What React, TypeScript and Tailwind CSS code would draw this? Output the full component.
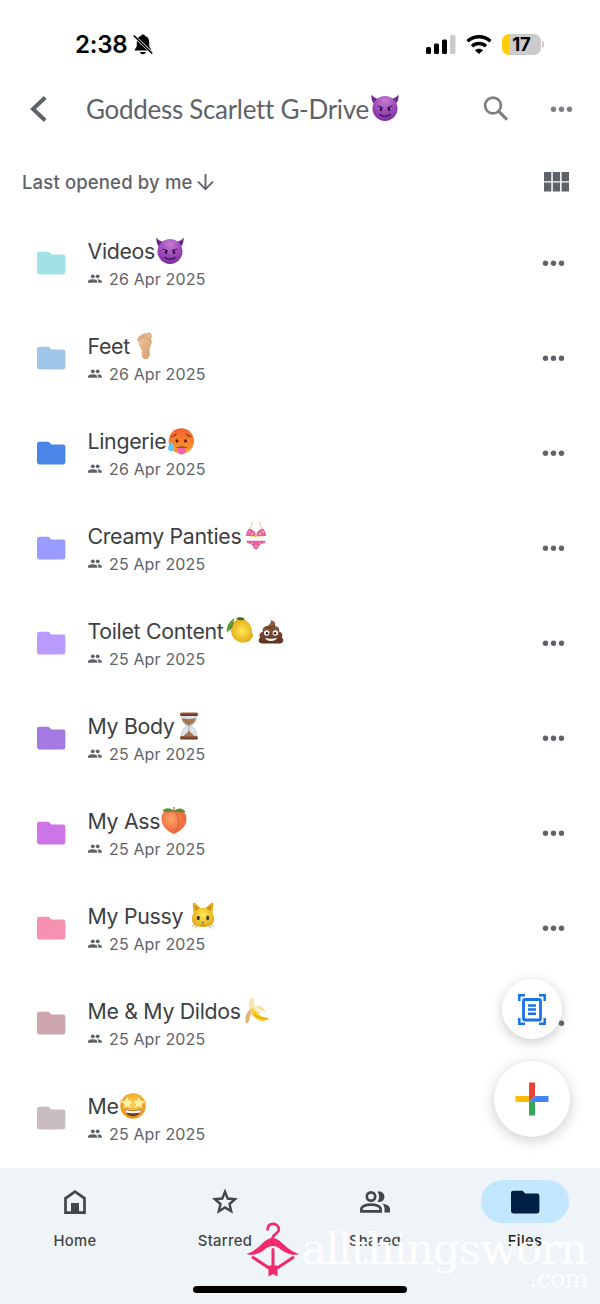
import React from "react";

type EmojiName =
  | "devil"
  | "foot"
  | "hot"
  | "bikini"
  | "lemon"
  | "poo"
  | "hourglass"
  | "peach"
  | "cat"
  | "banana"
  | "starstruck";

type Folder = {
  name: string;
  date: string;
  color: string;
  emojis: EmojiName[];
  gap: string;
};

const folders: Folder[] = [
  { name: "Videos", date: "26 Apr 2025", color: "text-[#a1e2e6]", emojis: ["devil"], gap: "ml-px" },
  { name: "Feet", date: "26 Apr 2025", color: "text-[#9fc5e8]", emojis: ["foot"], gap: "ml-[1.500px]" },
  { name: "Lingerie", date: "26 Apr 2025", color: "text-[#4986e7]", emojis: ["hot"], gap: "ml-px" },
  { name: "Creamy Panties", date: "25 Apr 2025", color: "text-[#9a9cff]", emojis: ["bikini"], gap: "ml-px" },
  { name: "Toilet Content", date: "25 Apr 2025", color: "text-[#b99aff]", emojis: ["lemon", "poo"], gap: "ml-[3px]" },
  { name: "My Body", date: "25 Apr 2025", color: "text-[#a47ae2]", emojis: ["hourglass"], gap: "ml-0" },
  { name: "My Ass", date: "25 Apr 2025", color: "text-[#cd74e6]", emojis: ["peach"], gap: "ml-0" },
  { name: "My Pussy", date: "25 Apr 2025", color: "text-[#f691b2]", emojis: ["cat"], gap: "ml-1.5" },
  { name: "Me & My Dildos", date: "25 Apr 2025", color: "text-[#cca6ac]", emojis: ["banana"], gap: "ml-[2.500px]" },
  { name: "Me", date: "25 Apr 2025", color: "text-[#cabdbf]", emojis: ["starstruck"], gap: "ml-0" },
];

const art: Record<EmojiName, React.ReactNode> = {
  devil: (
    <>
      <path d="M.5.5C0 6 2 9.500 5 11l5-6C6 5 3 4 .5.500ZM27.500.500C28 6 26 9.500 23 11l-5-6c4 0 7-1 9.500-4.500Z" fill="#6d2390" />
      <circle cx="14" cy="14.500" r="12.500" fill="url(#purple)" />
      <path d="M7 12.200c1.500 0 3 .600 4.300 1.600M21 12.200c-1.500 0-3 .600-4.300 1.600" stroke="#3b0b5c" strokeWidth="1.100" fill="none" strokeLinecap="round" />
      <ellipse cx="10" cy="15.200" rx="1.200" ry="2" fill="#35104f" />
      <ellipse cx="18" cy="15.200" rx="1.200" ry="2" fill="#35104f" />
      <path d="M9 20.500c2.800 2.300 7.200 2.300 10 0" stroke="#35104f" strokeWidth="1.200" fill="none" strokeLinecap="round" />
    </>
  ),
  foot: (
    <>
      <path d="M7.500 8c2-3 9-4 12-1.500 2 2 1.500 5-.300 8-1.500 3 .500 6-.700 9.500-1 3.500-6.300 4.500-7.500.500-.700-3 .500-4.500-.800-7.500-1.400-3-3.700-6-2.700-9Z" fill="url(#skin)" />
      <g fill="#e7b78d" stroke="#c68c60" strokeWidth=".5">
        <ellipse cx="17.800" cy="4.300" rx="2.600" ry="3.500" />
        <ellipse cx="13.800" cy="3.700" rx="1.500" ry="2.400" />
        <ellipse cx="11.200" cy="4.400" rx="1.300" ry="2" />
        <ellipse cx="9" cy="5.700" rx="1.200" ry="1.700" />
        <ellipse cx="7.500" cy="7.600" rx="1" ry="1.400" />
      </g>
    </>
  ),
  hot: (
    <>
      <circle cx="14.300" cy="14" r="12.700" fill="url(#heat)" />
      <path d="M4.500 9.500c2 0 3.700-1 4.500-2.500M24 9.500c-2 0-3.700-1-4.500-2.500" stroke="#8d2b12" strokeWidth="1.100" fill="none" strokeLinecap="round" />
      <ellipse cx="10" cy="14" rx="1.500" ry="1.800" fill="#652116" />
      <ellipse cx="18.500" cy="14" rx="1.500" ry="1.800" fill="#652116" />
      <path d="M9 21c3-2 8.500-2 11.500 0Z" fill="#7c2317" />
      <path d="M10.800 20.500h7.600v4c0 4-7.600 4-7.600 0Z" fill="#f066ac" />
      <path d="M4.200 14c2 3.600 3 5 3 7a3 3 0 0 1-6.200 0c0-2 1.700-3.600 3.200-7Z" fill="#67c5f4" />
    </>
  ),
  bikini: (
    <>
      <path d="M10 0c-.500 4-1.500 6-3.500 9M18 0c.500 4 1.500 6 3.500 9M5 13c5 2 13 2 18 0" stroke="#eec05e" strokeWidth="1.100" strokeDasharray="1.700 .7" fill="none" />
      <path d="M7.500 6.500C5.500 8 4 10.500 4 14h9.500c.800-3-1-5.500-6-7.500ZM20.500 6.500c2 1.500 3.500 4 3.500 7.500h-9.500c-.800-3 1-5.500 6-7.500ZM4.500 18.800h19l-.500 2.200c-4.500.500-6.500 3-7.500 6.200h-3C11.500 24 9.500 21.500 5 21Z" fill="#e85fa6" />
      <g fill="#ffda66">
        <circle cx="7.500" cy="10" r=".9" />
        <circle cx="10" cy="12" r=".9" />
        <circle cx="18" cy="12" r=".9" />
        <circle cx="21" cy="10" r=".9" />
        <circle cx="14" cy="24" r=".9" />
        <circle cx="10" cy="21.200" r=".7" />
        <circle cx="18" cy="21.200" r=".7" />
      </g>
    </>
  ),
  lemon: (
    <>
      <path d="M6 8C8 3 15 .500 20.500 4c4 2.500 5.700 7.500 5.500 12 1.500 1.500 1.500 3 .300 4.500-1 .500-1.300 1.500-2.300 3-4 3-11 3-15.500-1.500C4.500 18 4.500 12 6 8Z" fill="url(#lemon)" />
      <path d="M8 1.500C4 4 .500 9 .700 15c4-1.500 7-5.500 7.300-13.500Z" fill="#4f8a21" />
      <path d="M10 2C12-.5 17-.5 19 2.500c-3 1-6 1-9-.5Z" fill="#376e17" />
      <path d="M7.500 3C5 7 3.500 10 1.500 14" stroke="#a2be56" strokeWidth=".7" fill="none" />
    </>
  ),
  poo: (
    <>
      <path d="M14 3c3.500 1 5 3.200 4 6 3.500.500 5 3 4 5.500 3.500 1 4.200 4 2.800 6 2.700 2 1.500 6-2 6H5.500c-4 0-5-4-2.300-6-1.500-2-.500-5 2.800-6-1-2.500.5-5 4-5.500 2-1 4-2.500 4-6Z" fill="url(#brown)" />
      <path d="M9 10c3 1.500 6 .500 9-1" stroke="#512e22" strokeWidth=".8" fill="none" />
      <circle cx="9.700" cy="16" r="2.700" fill="#fff" />
      <circle cx="18.300" cy="16" r="2.700" fill="#fff" />
      <circle cx="10" cy="16.200" r="1.300" fill="#332520" />
      <circle cx="18" cy="16.200" r="1.300" fill="#332520" />
      <path d="M8 21c4 1 8 1 12 0-1.500 4-10.500 4-12 0Z" fill="#fff" />
    </>
  ),
  hourglass: (
    <>
      <path d="M6.500 3h15c0 6-1.500 8.500-5.500 11 4 2.500 5.500 5 5.500 11h-15c0-6 1.500-8.500 5.500-11-4-2.500-5.500-5-5.500-11Z" fill="#dce4ec" stroke="#a4acb4" strokeWidth=".6" />
      <path d="M7.500 6.500c4 1 9 1 13 0-.500 3.500-2.800 5-6.500 7-4-2-6-3.500-6.500-7ZM14 14v7M8.500 24.500c1-2 3.500-2.500 5.500-5.500 2 3 4.500 3.500 5.500 5.500Z" fill="#a57855" stroke="#a57855" strokeWidth=".6" />
      <rect x="5" y=".500" width="18" height="3.500" rx="1.500" fill="url(#brown)" />
      <rect x="5" y="24" width="18" height="3.500" rx="1.500" fill="url(#brown)" />
    </>
  ),
  peach: (
    <>
      <path d="M14 4c6-4 12.500 0 12.500 8S20 24.500 14 27C8 24.500 1.500 20 1.500 12S8 0 14 4Z" fill="url(#peach)" />
      <path d="M15 5c5 5 5 15 0 20" stroke="#cf552b" strokeWidth=".9" fill="none" />
      <path d="M14 4C10 .300 5 .500 2.500 4c4 1.300 8 1.200 11.500 0ZM14 4c4-3.700 9-3.500 11.500 1-4 .800-8 .500-11.500-1Z" fill="#588c2c" />
      <path d="M13.500 0h1v5h-1z" fill="#7c4b24" />
    </>
  ),
  cat: (
    <>
      <path d="M4 2.500c-1-1.500.500-2.300 2-1.500l5.500 5h5L22 1c1.500-.800 2.500 0 2.300 1.500L23.500 11c2 4 2.200 8 0 11-3 4-16 4-19 0-2.200-3-2-7 0-11L3.700 2.500Z" fill="url(#lemon)" />
      <path d="m5.500 3 1 6 4-3ZM22.500 3l-1 6-4-3Z" fill="#d68a18" />
      <ellipse cx="9.300" cy="16" rx="1.400" ry="2.300" fill="#2c3030" />
      <ellipse cx="18.700" cy="16" rx="1.400" ry="2.300" fill="#2c3030" />
      <path d="M12.700 20h2.600L14 21.500Z" fill="#765253" />
      <path d="M14 21.500V23m-3.500 0c1.500.700 2.500.500 3.500-.500 1 1 2 1.200 3.500.5M6 22.500l-3 2M8 24l-3 2.500M22 22.500l3 2M20 24l3 2.500" stroke="#9b7825" strokeWidth=".6" fill="none" />
    </>
  ),
  banana: (
    <>
      <path d="M7 1c2-1.500 4 0 4 3 0 5 2 9 7 11.500l-8 5C6 15 5 8 7 1Z" fill="#f5e5af" />
      <path d="M8 11c3 1 5 4 8 6.500 3 2.300 7 3 10 4-3 3-9 3.300-12.500.5C9.500 19 9 15 8 11Z" fill="#f8cc27" />
      <path d="M8 12c-5 3-7 9-4.500 15 3-2 4.500-8 4.500-15Z" fill="#dcb76f" />
      <path d="M12 10c5-2.500 9 0 11 6-3-2.500-7-3-11-6Z" fill="#f6dea0" />
      <path d="M10 16c3 4 8 6 15 5.500" stroke="#dfa50f" strokeWidth="1.200" fill="none" />
    </>
  ),
  starstruck: (
    <>
      <circle cx="14" cy="14" r="12.700" fill="url(#gold)" />
      <path d="m8.300 4 2 4.300 5 .5-3.800 3.400 1.200 4.800-4.400-2.500L4 17l1.200-4.800L.500 9l5.500-.500ZM19.700 4l2 4.300 5.600.700-4.500 3.200L24 17l-4.300-2.500-4.400 2.500 1.200-4.800-3.800-3.400 5-.500Z" fill="#fff0a1" stroke="#e7a22b" strokeWidth=".5" />
      <path d="M6 17.500c5 1.500 11 1.500 16 0 0 9-16 9-16 0Z" fill="#713d1c" />
      <path d="M6.500 18c5 1.500 10 1.500 15 0v2.500c-5 1-10 1-15 0Z" fill="#fff" />
    </>
  ),
};

function Emoji({ name }: { name: EmojiName }) {
  return (
    <svg viewBox="0 0 28 28" className="size-7 shrink-0" role="img" aria-label={name}>
      {art[name]}
    </svg>
  );
}

// shared gradients used by the emoji
function Gradients() {
  return (
    <svg width="0" height="0" className="absolute" aria-hidden="true">
      <defs>
        <radialGradient id="purple" cx=".5" cy=".2" r=".8">
          <stop offset="0" stopColor="#c27bd0" />
          <stop offset=".6" stopColor="#9a48b4" />
          <stop offset="1" stopColor="#7d2ca1" />
        </radialGradient>
        <linearGradient id="skin" x2="1" y2="1">
          <stop stopColor="#efc49c" />
          <stop offset="1" stopColor="#d49a6b" />
        </linearGradient>
        <linearGradient id="heat" x2="0" y2="1">
          <stop stopColor="#ef6030" />
          <stop offset="1" stopColor="#ff9f2b" />
        </linearGradient>
        <radialGradient id="lemon">
          <stop stopColor="#ffe955" />
          <stop offset="1" stopColor="#e6ad1c" />
        </radialGradient>
        <linearGradient id="brown" x2="0" y2="1">
          <stop stopColor="#9c6242" />
          <stop offset="1" stopColor="#5c3224" />
        </linearGradient>
        <radialGradient id="peach" cx=".4" cy=".4">
          <stop stopColor="#ffa46c" />
          <stop offset="1" stopColor="#ee6c3f" />
        </radialGradient>
        <radialGradient id="gold" cx=".5" cy=".4">
          <stop stopColor="#ffe05b" />
          <stop offset="1" stopColor="#ed971d" />
        </radialGradient>
      </defs>
    </svg>
  );
}

function FolderIcon({ className }: { className: string }) {
  return (
    <svg viewBox="0 0 29 24" className={`h-6 w-[29px] shrink-0 ${className}`} fill="currentColor">
      <path d="M2.300.800h8.700c.600 0 1 .2 1.400.600l2 2h11.700a2.300 2.300 0 0 1 2.300 2.300v15.400a2.300 2.300 0 0 1-2.300 2.300H2.300a2.300 2.300 0 0 1-2.300-2.300v-18A2.300 2.300 0 0 1 2.300.800Z" />
    </svg>
  );
}

function PeopleIcon() {
  return (
    <svg viewBox="0 0 14 9" className="h-[9px] w-3.5 shrink-0" fill="#5f6368">
      <circle cx="4.800" cy="2.300" r="1.900" />
      <circle cx="9.700" cy="2.300" r="1.900" />
      <path d="M0 8.700V7.400c0-1.500 3-2.200 4.700-2.200s4.600.7 4.600 2.200v1.300ZM10.300 8.700V7.400c0-.900-.400-1.500-1-2.100 1.700-.1 4.500.7 4.500 2.100v1.300Z" />
    </svg>
  );
}

function Dots({ className }: { className: string }) {
  return (
    <svg viewBox="0 0 24 6" className={`h-1.5 w-6 shrink-0 ${className}`} fill="currentColor">
      <circle cx="3.500" cy="3.200" r="2.700" />
      <circle cx="11.500" cy="3.200" r="2.700" />
      <circle cx="19.500" cy="3.200" r="2.700" />
    </svg>
  );
}

function StatusBar() {
  return (
    <div className="flex h-[88px] items-center pt-px pr-14 pl-[75px]">
      <span className="w-[53px] text-[24px] leading-8 font-semibold tracking-[-0.2px] whitespace-nowrap text-black">2:38</span>
      <svg viewBox="0 0 20 22" className="ml-[5px] h-[22px] w-5">
        <path d="M10 .500a2 2 0 0 1 2 1.400c3 .700 4.200 3.100 4.200 6v3.600c0 2 2.300 3.500 2.300 5H1.500c0-1.500 2.300-3 2.300-5V7.900c0-2.900 1.200-5.300 4.200-6a2 2 0 0 1 2-1.400ZM7 18h6c-.700 3-5.300 3-6 0Z" />
        <path d="m1.500 2.500 18 17" stroke="#fff" strokeWidth="2.800" />
        <path d="m.700 1.500 18.500 18" stroke="#000" strokeWidth="1.700" />
      </svg>
      <svg viewBox="0 0 30 20" className="ml-auto h-5 w-[30px]">
        <rect x="0" y="12" width="5" height="7" rx="1.500" />
        <rect x="8" y="8.500" width="5" height="10.500" rx="1.500" />
        <rect x="16" y="4.500" width="5" height="14.500" rx="1.500" />
        <rect x="24" y="0" width="5.500" height="19" rx="1.500" fill="#cbcbcb" />
      </svg>
      <svg viewBox="0 0 26 20" className="ml-2.5 h-5 w-[26px]">
        <path d="M1.500 6.300c6.500-6 16.500-6 23 0M6 11.200c4-3.700 10-3.700 14 0" stroke="#000" strokeWidth="3.400" fill="none" />
        <path d="M9 15.300c2.300-2 5.700-2 8 0l-4 3.700Z" />
      </svg>
      <div className="ml-2.5 flex h-[21px] w-[39px] items-center justify-center overflow-hidden rounded-[7px] bg-[linear-gradient(90deg,#ffcc0a_7px,#cbcbcb_7px)] text-[18.500px] leading-none font-bold tracking-[-0.1px] text-black">
        17
      </div>
      <div className="ml-px h-[7px] w-0.5 rounded-r-full bg-[#cbcbcb]" />
    </div>
  );
}

function Header() {
  return (
    <>
      <div className="flex h-[42px] items-center pr-[26px] pl-[30px] text-[#5f6368]">
        <svg viewBox="0 0 18 28" className="h-7 w-[18px]" fill="none" stroke="currentColor" strokeWidth="4">
          <path d="M15.200 2.500 3 14l12.200 11.500" />
        </svg>
        <h1 className="ml-[38px] w-[285px] font-[Lato,sans-serif] text-[26px] leading-8 tracking-[-0.3px] whitespace-nowrap">
          Goddess Scarlett G-Drive
        </h1>
        <span className="-mt-0.5">
          <Emoji name="devil" />
        </span>
        <svg viewBox="0 0 26 26" className="ml-[84px] size-[26px] text-[#7b7f83]" fill="none" stroke="currentColor" strokeWidth="2.700">
          <circle cx="10" cy="9.500" r="7.900" />
          <path d="m15.500 15.200 8.500 8.500" strokeWidth="3.200" />
        </svg>
        <Dots className="ml-auto text-[#7b7f83]" />
      </div>
      <div className="mt-5 flex h-[65px] items-center pr-[31px] pb-px pl-[22px] text-[#5f6368]">
        <span className="w-[172px] text-[18.500px] leading-6 font-medium tracking-[0.15px] whitespace-nowrap">Last opened by me</span>
        <svg viewBox="0 0 18 18" className="ml-0.5 size-[18px]" fill="none" stroke="currentColor" strokeWidth="1.900">
          <path d="M9.500 1v15M2 8.700l7.500 7.500L17 8.700" />
        </svg>
        <svg viewBox="0 0 25 20" className="ml-auto h-5 w-[25px]" fill="currentColor">
          <path d="M0 0h7.300v9.200H0zM8.800 0h7.300v9.200H8.800zM17.600 0H25v9.200h-7.400zM0 10.400h7.300v9.200H0zM8.800 10.400h7.300v9.200H8.800zM17.600 10.400H25v9.200h-7.400z" />
        </svg>
      </div>
    </>
  );
}

function FolderRow({ folder }: { folder: Folder }) {
  return (
    <li className="flex h-[95px] items-center pr-[34px] pl-[37px]">
      <FolderIcon className={folder.color} />
      <div className="ml-[21.500px]">
        <div className="flex h-7 items-center text-[21.300px] leading-7 tracking-[-0.3px] text-[#3c4043]">
          <span className="mt-px whitespace-nowrap">{folder.name}</span>
          <span className={`flex gap-[3px] ${folder.gap}`}>
            {folder.emojis.map((e) => (
              <Emoji key={e} name={e} />
            ))}
          </span>
        </div>
        <div className="mt-1 flex h-5 items-center gap-[7.500px] text-[16px] leading-5 tracking-[0.15px] text-[#5f6368]">
          <PeopleIcon />
          <span>{folder.date}</span>
        </div>
      </div>
      <Dots className="ml-auto text-[#5f6368]" />
    </li>
  );
}

function NavItem({ label, active, children }: { label: string; active?: boolean; children: React.ReactNode }) {
  return (
    <div className="flex flex-1 flex-col items-center pt-3">
      <div className={`flex h-[43px] w-[88px] items-center justify-center rounded-full ${active ? "bg-[#c2e7ff]" : ""}`}>{children}</div>
      <span className={`mt-2 text-[14.800px] leading-5 font-medium tracking-[0.3px] ${active ? "text-[#1f1f1f]" : "text-[#444746]"}`}>{label}</span>
    </div>
  );
}

function BottomNav() {
  return (
    <nav className="relative flex h-[136px] bg-[#eff4f9]">
      <NavItem label="Home">
        <svg viewBox="0 0 24 26" className="h-[26px] w-6">
          <path d="M2.500 23.700V9.300L12 2.700l9.500 6.600v14.400Z" fill="none" stroke="#444746" strokeWidth="2.700" />
          <path d="M8 14h8v10H8z" fill="#444746" />
        </svg>
      </NavItem>
      <NavItem label="Starred">
        <svg viewBox="0 0 28 28" className="size-7" fill="none" stroke="#444746" strokeWidth="2.400">
          <path d="m14 3.800 2.700 6.700 7.400.700-5.600 4.800 1.700 7.200-6.200-3.800-6.200 3.800 1.700-7.200-5.600-4.800 7.400-.700Z" />
        </svg>
      </NavItem>
      <NavItem label="Shared">
        <svg viewBox="0 0 30 24" className="h-6 w-[30px]">
          <circle cx="11" cy="6.500" r="4.200" fill="none" stroke="#444746" strokeWidth="2.700" />
          <path d="M1.400 21.300v-2.200c0-6 19.200-6 19.200 0v2.200Z" fill="none" stroke="#444746" strokeWidth="2.700" />
          <path d="M17.300 11.700c2.400-2.500 2.400-7.500 0-10 9.500-2.500 9.500 12.500 0 10ZM24.500 22.500v-4c0-2-.800-3.600-2.500-5 4.500.700 8 2.400 8 5.500v3.500Z" fill="#444746" />
        </svg>
      </NavItem>
      <NavItem label="Files" active>
        <FolderIcon className="text-[#001f45]" />
      </NavItem>
      <div className="absolute bottom-[11px] left-[193px] h-[7px] w-[214px] rounded-full bg-black" />
    </nav>
  );
}

function FloatingButtons() {
  return (
    <div className="absolute top-[979px] right-[30px] flex flex-col items-center gap-[22px]">
      <div className="flex size-[60px] items-center justify-center rounded-full bg-white shadow-[0_3px_12px_rgba(60,64,67,0.28)]">
        <svg viewBox="0 0 28 31" className="h-[31px] w-7" fill="none" stroke="#1a73e8" strokeWidth="2.500">
          <path d="M1.300 7V1.300H7M21 1.300h5.700V7M1.300 24v5.700H7M21 29.700h5.700V24" />
          <rect x="5.500" y="5.500" width="17" height="20.500" rx="1.500" strokeWidth="2.800" />
          <path d="M10 11.500h8M10 15.500h8M10 19.700h8" />
        </svg>
      </div>
      <div className="flex size-[76px] items-center justify-center rounded-full bg-white shadow-[0_3px_14px_rgba(60,64,67,0.28)]">
        <svg viewBox="0 0 34 34" className="size-[34px]">
          <path d="M14 .500h6V14l-6 6Z" fill="#ea4335" />
          <path d="M.500 14H14v6H.500z" fill="#fbbc04" />
          <path d="M14 20h6v13.500h-6z" fill="#34a853" />
          <path d="M20 14h13.500v6H14Z" fill="#4285f4" />
        </svg>
      </div>
    </div>
  );
}

function Watermark() {
  return (
    <div className="pointer-events-none absolute top-[1222px] left-[246px] flex">
      <svg viewBox="0 0 54 56" className="h-14 w-[54px]" fill="none" stroke="#f12a6b" strokeLinecap="round">
        <path d="M21.500 7.500c0-8 11.500-7 11.300.300-.100 4.200-6.300 3.400-6.300 9.200" strokeWidth="2.700" />
        <path d="M.500 32C13 28.500 18 16 26.500 16S40 28.500 53.500 32c-8 2.500-15-1.500-20-5.500-4-3.300-9.500-3.300-13.500 0-5.500 4.500-12 8-19.500 5.500Z" fill="#f12a6b" stroke="none" />
        <path d="M27 27.500V45M7 35.500l17.500 11.500M47 35.500 32 45.500" strokeWidth="3" />
        <path d="M22.500 43.500h9v11L27 52l-4.500 2.500Z" fill="#f12a6b" stroke="none" />
      </svg>
      <div className="ml-px flex w-[287px] flex-col text-right font-['DejaVu_Serif',serif] text-white">
        <span className="text-left text-[43px] leading-[54px] tracking-[-1.1px] whitespace-nowrap">allthingsworn</span>
        <span className="-mt-[11px] text-[25px] leading-7 tracking-[-0.5px]">.com</span>
      </div>
    </div>
  );
}

export default function App() {
  return (
    <div className="relative flex h-[1304px] w-[600px] flex-col overflow-hidden bg-white font-[Inter,sans-serif]">
      <Gradients />
      <StatusBar />
      <Header />
      <ul className="h-[953px] overflow-hidden">
        {folders.map((folder) => (
          <FolderRow key={folder.name} folder={folder} />
        ))}
      </ul>
      <BottomNav />
      <FloatingButtons />
      <Watermark />
    </div>
  );
}
